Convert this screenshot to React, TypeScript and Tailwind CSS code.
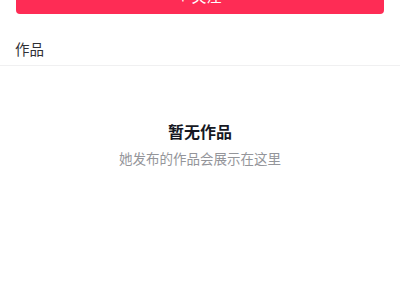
import React from "react";

const App = () => {
  return (
    <div
      className="w-full h-[300px] overflow-hidden bg-white"
      style={{ fontFamily: '"Noto Sans CJK SC", "Noto Sans", sans-serif' }}
    >
      <button className="mx-4 -mt-[22px] h-[36px] w-[368px] rounded-[4px] bg-[#fe2c55] text-white text-[15px] flex items-center justify-center gap-1">
        <span className="text-[16px] leading-none">+</span>
        <span>关注</span>
      </button>

      <div className="px-[15px] pt-[25px] pb-[6px] border-b border-[#f0f0f1]">
        <p className="text-[14.5px] leading-[20px] text-[#2f3035]">作品</p>
      </div>

      <div className="mt-[54px] flex flex-col items-center">
        <p className="text-[16px] leading-[22px] font-bold text-[#161823]">暂无作品</p>
        <p className="mt-[6px] text-[13.5px] leading-[20px] text-[#94959a]">
          她发布的作品会展示在这里
        </p>
      </div>
    </div>
  );
};

export default App;
